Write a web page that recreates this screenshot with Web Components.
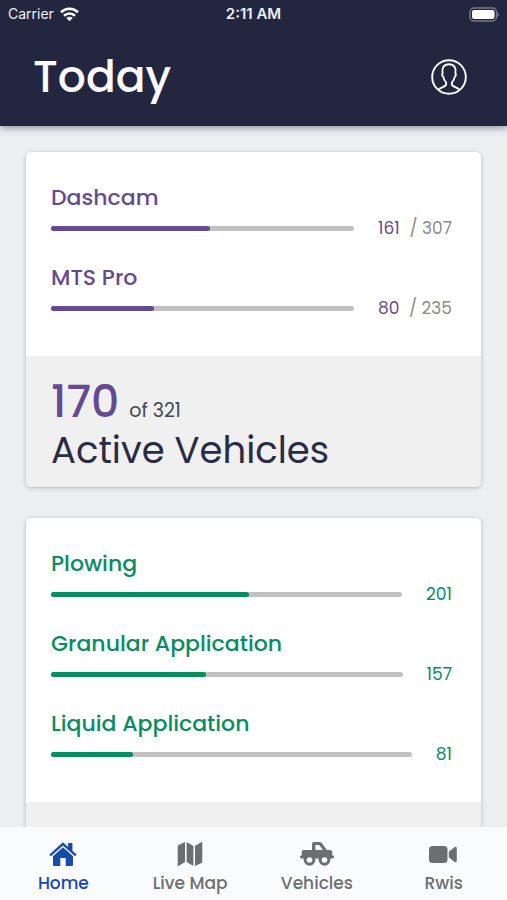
<!DOCTYPE html>
<html lang="en">
<head>
<meta charset="utf-8">
<meta name="viewport" content="width=device-width, initial-scale=1">
<title>Today</title>
<style>
  html, body { margin: 0; height: 100%; }
  body { font-family: Poppins, Inter, "Open Sans", sans-serif; background: #eceef0; color: #2a2c45; }
</style>
</head>
<body>
<fleet-app>
  <status-bar slot="top" carrier="Carrier" time="2:11 AM"></status-bar>
  <page-header slot="top">Today</page-header>

  <stat-card style="--accent: #654a92">
    <stat-row label="Dashcam" value="161" max="307" show-max></stat-row>
    <stat-row label="MTS Pro" value="80" max="235" show-max></stat-row>
    <stat-total slot="footer" value="170" note="of 321">Active Vehicles</stat-total>
  </stat-card>

  <stat-card style="--accent: #078d61">
    <stat-row label="Plowing" value="201" max="357"></stat-row>
    <stat-row label="Granular Application" value="157" max="357"></stat-row>
    <stat-row label="Liquid Application" value="81" max="357"></stat-row>
  </stat-card>

  <tab-bar slot="bottom">
    <tab-item icon="home" active>Home</tab-item>
    <tab-item icon="map">Live Map</tab-item>
    <tab-item icon="truck">Vehicles</tab-item>
    <tab-item icon="video">Rwis</tab-item>
  </tab-bar>
</fleet-app>

<script>
  const define = (name, render) => customElements.define(name, class extends HTMLElement {
    constructor() {
      super();
      this.attachShadow({ mode: 'open' });
    }
    connectedCallback() {
      this.shadowRoot.innerHTML = render(this);
    }
  });

  define('fleet-app', () => `
    <style>
      :host { display: flex; flex-direction: column; height: 100vh; }
      .top { position: relative; z-index: 1; background: #23263f; box-shadow: 0 2px 7px rgba(35, 38, 63, .45); }
      main {
        flex: 1; min-height: 0; overflow-y: auto; scrollbar-width: none;
        display: flex; flex-direction: column; gap: 31px; padding: 26px;
      }
    </style>
    <header class="top"><slot name="top"></slot></header>
    <main><slot></slot></main>
    <slot name="bottom"></slot>`);

  define('status-bar', el => `
    <style>
      :host {
        display: grid; grid-template-columns: 1fr auto 1fr; align-items: center;
        height: 28px; padding: 0 8px; color: #eef0f8;
        font: 14px/28px Inter, sans-serif;
      }
      .left { display: flex; align-items: center; gap: 6px; }
      .time { font-size: 15px; font-weight: 600; }
      .battery { justify-self: end; }
      svg { display: block; }
    </style>
    <span class="left">${el.getAttribute('carrier')}
      <svg width="19" height="15" viewBox="0 0 19 15" fill="none" stroke="#fff" stroke-width="2.6" aria-label="Wi-Fi">
        <path d="M1 5.2C5.8.6 13.2.6 18 5.2M4 8.7c3.2-3 7.8-3 11 0"/>
        <path d="M9.500 14.200 6.300 11c1.800-1.700 4.600-1.700 6.400 0z" fill="#fff" stroke="none"/>
      </svg>
    </span>
    <span class="time">${el.getAttribute('time')}</span>
    <svg class="battery" width="30" height="15" viewBox="0 0 30 15" aria-label="Battery">
      <rect x="1" y="1" width="26.500" height="13" rx="4" fill="none" stroke="#777a8a" stroke-width="1.400"/>
      <rect x="3" y="3" width="22.500" height="9" rx="2" fill="#fff"/>
      <path d="M28.500 5.200c2 .8 2 3.800 0 4.600z" fill="#777a8a"/>
    </svg>`);

  define('page-header', () => `
    <style>
      :host { display: flex; align-items: center; justify-content: space-between; padding: 0 39px 0 33px; color: #fafbff; }
      h1 { margin: 0; font-size: 44px; font-weight: 500; line-height: 98px; }
      button { padding: 0; border: 0; background: none; color: inherit; }
      svg { display: block; }
    </style>
    <h1><slot></slot></h1>
    <button type="button" aria-label="Profile">
      <svg width="38" height="38" viewBox="0 0 38 38" fill="none" stroke="currentColor" stroke-width="1.900" stroke-linejoin="round">
        <circle cx="19" cy="19" r="16.800"/>
        <path d="M8.500 32c1.300-2.300 4.200-2.700 6.200-3.800 1.700-.9 1.700-2.500 1.300-4-1.600-1.400-2.300-3.200-2.600-5.100-1.400-.8-1.500-3-.8-4C11.600 9.500 14 6.300 19 6.300s7.400 3.200 6.400 8.800c.7 1 .6 3.200-.8 4-.3 1.900-1 3.700-2.600 5.100-.4 1.500-.4 3.100 1.300 4 2 1.100 4.900 1.500 6.200 3.800"/>
      </svg>
    </button>`);

  define('stat-card', () => `
    <style>
      :host {
        display: block; flex: none; border-radius: 5px; overflow: hidden; background: #fff;
        box-shadow: 0 1px 4px rgba(35, 38, 63, .28);
      }
      .rows { display: flex; flex-direction: column; gap: 20px; padding: 31px 29px 33px 25px; }
      footer { min-height: 131px; background: #f0f0f0; }
    </style>
    <section class="rows"><slot></slot></section>
    <footer><slot name="footer"></slot></footer>`);

  define('stat-row', el => {
    const { label, value, max } = Object.fromEntries([...el.attributes].map(a => [a.name, a.value]));
    const total = el.hasAttribute('show-max');
    return `
    <style>
      :host { display: block; color: var(--accent); line-height: 30px; }
      label { display: block; font-size: 22px; font-weight: 500; }
      .line { display: flex; align-items: center; gap: 24px; font-size: 17px; }
      progress {
        appearance: none; flex: 1; min-width: 0; height: 5px; border: 0;
        border-radius: 3px; overflow: hidden; background: #c1c1c1;
      }
      progress::-webkit-progress-bar { background: #c1c1c1; }
      progress::-webkit-progress-value { background: var(--accent); border-radius: 0 3px 3px 0; }
      .value { display: flex; justify-content: space-between; gap: 8px; }
      .value.total { min-width: 74px; }
      .max { color: #8c8c8c; }
    </style>
    <label for="bar">${label}</label>
    <div class="line">
      <progress id="bar" value="${value}" max="${max}"></progress>
      <span class="value ${total ? 'total' : ''}"><span>${value}</span>${total ? `<span class="max">/ ${max}</span>` : ''}</span>
    </div>`;
  });

  define('stat-total', el => `
    <style>
      :host { display: block; padding: 20px 25px 15px; }
      .count { display: flex; align-items: baseline; gap: 10px; font-size: 19px; line-height: 20px; color: #45464f; }
      strong { font-size: 44px; font-weight: 500; line-height: 52px; color: var(--accent); }
      .name { font-size: 37px; line-height: 44px; }
    </style>
    <div class="count"><strong>${el.getAttribute('value')}</strong><span>${el.getAttribute('note')}</span></div>
    <div class="name"><slot></slot></div>`);

  define('tab-bar', () => `
    <style>
      :host { display: block; position: relative; background: #fafbfd; }
      nav { display: grid; grid-template-columns: repeat(4, 1fr); padding: 12px 0 3px; }
    </style>
    <nav aria-label="Main"><slot></slot></nav>`);

  const icons = {
    home: `<path d="M16 3.200 2.400 15.600l1.500 1.700L16 6.400l12.100 10.900 1.500-1.700-4.200-3.900V4h-4.300v3.900z"/>
           <path d="M16 8.300 6 17.300v8.200c0 1 .5 1.500 1.500 1.500h5.800v-8h5.400v8h5.800c1 0 1.500-.5 1.500-1.500v-8.200z"/>`,
    map: `<path d="M11 3v20l-6.100 3.800C4 27.200 3.700 27 3.700 26V7.500c0-.8.3-1.200.9-1.600z"/>
          <path d="M12.600 3l6.800 4v20l-6.800-4z"/>
          <path d="M21 7l6.100-3.800c.9-.4 1.200-.2 1.200.8v18.500c0 .8-.3 1.200-.9 1.600L21 27z"/>`,
    truck: `<path fill-rule="evenodd" d="M11 11V5c0-1.300.7-2 2-2h5.400c1 0 1.700.4 2.300 1.100l5.300 7h3.300c1.300 0 2 .7 2 2v3.500h.4c.8 0 1.300.5 1.300 1.200 0 1-.6 1.700-1.700 1.700H.7c-1.100 0-1.700-.7-1.700-1.700 0-.7.5-1.200 1.300-1.200h.4V13c0-1.300.7-2 2-2zm3.400 0h7.500l-3.700-4.900h-3.800z"/>
            <path d="M14.400 21a5.900 5.900 0 1 0-11.800 0zM29.400 21a5.900 5.900 0 1 0-11.800 0z"/>
            <circle cx="8.500" cy="21" r="4.300" fill="#fafbfd" stroke="currentColor" stroke-width="3"/>
            <circle cx="23.500" cy="21" r="4.300" fill="#fafbfd" stroke="currentColor" stroke-width="3"/>`,
    video: `<rect x="1" y="7" width="18.500" height="17" rx="3.500"/>
            <path d="M20.800 12.700 26 8.400c1.500-1 2.800-.7 2.800 1v12.200c0 1.700-1.300 2-2.800 1l-5.200-4.300z"/>`
  };

  define('tab-item', el => `
    <style>
      :host { display: block; color: #6d6e72; }
      :host([active]) { color: #1849ad; }
      a { display: flex; flex-direction: column; align-items: center; color: inherit; text-decoration: none; font-size: 17px; font-weight: 500; line-height: 28px; }
      svg { display: block; overflow: visible; fill: currentColor; }
    </style>
    <a href="#${el.getAttribute('icon')}" ${el.hasAttribute('active') ? 'aria-current="page"' : ''}>
      <svg width="32" height="30" viewBox="0 0 32 30" aria-hidden="true">${icons[el.getAttribute('icon')]}</svg>
      <span><slot></slot></span>
    </a>`);
</script>
</body>
</html>
